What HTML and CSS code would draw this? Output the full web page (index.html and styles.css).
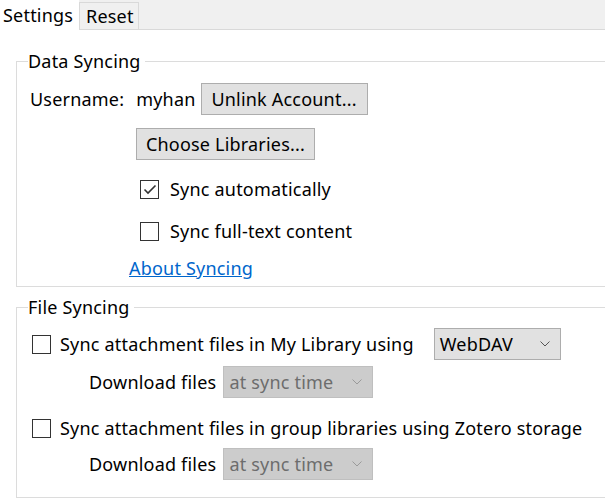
FILE: index.html
```html
<!DOCTYPE html>
<html>
<head>
<meta charset="utf-8">
<link rel="stylesheet" href="styles.css">
</head>
<body>
<div class="tabs">
  <div class="tab active">Settings</div>
  <div class="tab">Reset</div>
  <div class="tab-fill"></div>
</div>
<div class="panel">
  <fieldset class="group group-data">
    <legend>Data Syncing</legend>
    <div class="row user-row">
      <span class="label">Username:</span>
      <span class="user">myhan</span>
      <span class="btn btn-unlink">Unlink Account...</span>
    </div>
    <div class="row indent-btn">
      <span class="btn btn-choose">Choose Libraries...</span>
    </div>
    <div class="row check-row cb-auto">
      <span class="cb checked"><svg width="14" height="12" viewBox="0 0 14 12"><path d="M1.5 6.5 L5 10 L12.5 2.5" fill="none" stroke="#333" stroke-width="1.6"/></svg></span>
      <span>Sync automatically</span>
    </div>
    <div class="row check-row cb-full">
      <span class="cb"></span>
      <span>Sync full-text content</span>
    </div>
    <div class="row link-row"><a href="#" class="link">About Syncing</a></div>
  </fieldset>
  <fieldset class="group group-file">
    <legend>File Syncing</legend>
    <div class="row file-row file-row1">
      <span class="cb"></span>
      <span class="file-label">Sync attachment files in My Library using</span>
      <span class="select sel-webdav">WebDAV<svg class="chev" width="10" height="6" viewBox="0 0 10 6"><path d="M0.5 0.5 L5 5 L9.5 0.5" fill="none" stroke="#555" stroke-width="1"/></svg></span>
    </div>
    <div class="row dl-row">
      <span>Download files</span>
      <span class="select disabled">at sync time<svg class="chev" width="10" height="6" viewBox="0 0 10 6"><path d="M0.5 0.5 L5 5 L9.5 0.5" fill="none" stroke="#9a9a9a" stroke-width="1"/></svg></span>
    </div>
    <div class="row file-row file-row2">
      <span class="cb"></span>
      <span class="file-label">Sync attachment files in group libraries using Zotero storage</span>
    </div>
    <div class="row dl-row dl-row2">
      <span>Download files</span>
      <span class="select disabled">at sync time<svg class="chev" width="10" height="6" viewBox="0 0 10 6"><path d="M0.5 0.5 L5 5 L9.5 0.5" fill="none" stroke="#9a9a9a" stroke-width="1"/></svg></span>
    </div>
  </fieldset>
</div>
</body>
</html>
```
FILE: styles.css
```css
html, body {
  margin: 0;
  padding: 0;
  background: #ffffff;
}
body {
  font-family: "Noto Sans", "Open Sans", sans-serif;
  font-size: 18px;
  letter-spacing: 0.2px;
  color: #000;
  width: 605px;
  height: 500px;
  overflow: hidden;
}
.tabs {
  display: flex;
  height: 29px;
  border-bottom: 1px solid #d9d9d9;
  background: #f0f0f0;
}
.tab {
  display: flex;
  align-items: center;
  line-height: 1;
}
.tab.active {
  background: #ffffff;
  width: 76px;
  padding-left: 3px;
  height: 30px;
  margin-bottom: -1px;
}
.tab:not(.active) {
  margin-top: 2px;
  width: 52px;
  padding-left: 6px;
  border: 1px solid #d9d9d9;
  border-bottom: none;
  background: #f0f0f0;
}
.tab-fill { flex: 1; }
.panel {
  display: flex;
  flex-direction: column;
  padding-left: 16px;
}
.group {
  margin: 0;
  padding: 0 0 0 12px;
  border: 1px solid #dcdcdc;
  border-right: none;
  min-width: 0;
  box-sizing: border-box;
}
.group legend {
  padding: 0 4px 0 0;
  margin-left: -1px;
  line-height: 22px;
}
.group-data {
  margin-top: 20px;
  height: 237px;
}
.group-file {
  margin-top: 9px;
  height: 202px;
}
.row {
  display: flex;
  align-items: center;
}
.user-row {
  margin-top: 11px;
  padding-left: 1px;
  height: 32px;
}
.user {
  margin-left: 12px;
}
.btn {
  display: inline-flex;
  align-items: center;
  justify-content: center;
  height: 30px;
  border: 1px solid #adadad;
  background: #e1e1e1;
  box-sizing: content-box;
}
.btn-unlink {
  margin-left: 5px;
  width: 165px;
}
.indent-btn {
  margin-top: 13px;
  padding-left: 107px;
}
.btn-choose {
  width: 177px;
}
.cb {
  width: 17px;
  height: 17px;
  border: 1px solid #333;
  display: inline-flex;
  align-items: center;
  justify-content: center;
  flex-shrink: 0;
}
.check-row {
  padding-left: 111px;
  height: 22px;
}
.check-row .cb {
  margin-right: 11px;
}
.cb-auto { margin-top: 18px; }
.cb-full { margin-top: 20px; }
.link-row {
  margin-top: 14px;
  padding-left: 100px;
}
.link {
  color: #0066cc;
  text-decoration: underline;
}
.file-row {
  padding-left: 3px;
  height: 32px;
}
.file-row .cb { margin-right: 9px; }
.file-row1 { margin-top: 10px; }
.file-row2 { margin-top: 14px; }
.sel-webdav {
  margin-left: 20px;
  width: 110px;
  background: #e1e1e1;
  border: 1px solid #adadad;
}
.select {
  display: inline-flex;
  align-items: center;
  justify-content: space-between;
  height: 30px;
  padding: 0 10px 0 5px;
  box-sizing: content-box;
}
.chev { flex-shrink: 0; }
.dl-row {
  padding-left: 60px;
  margin-top: 6px;
  height: 32px;
}
.dl-row2 { margin-top: 4px; }
.select.disabled {
  margin-left: 7px;
  width: 133px;
  background: #cccccc;
  border: 1px solid #bfbfbf;
  color: #6d6d6d;
}
```
